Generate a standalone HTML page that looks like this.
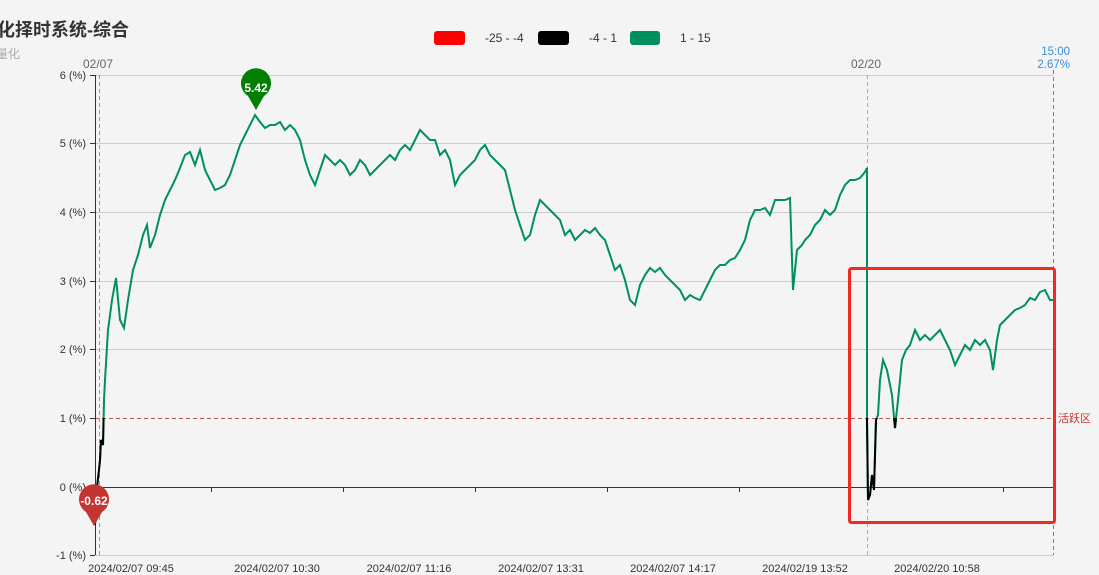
<!DOCTYPE html>
<html><head><meta charset="utf-8"><style>
body{margin:0;background:#f4f4f4;width:1099px;height:575px;overflow:hidden;font-family:"Liberation Sans","Noto Sans CJK SC",sans-serif}
</style></head><body>
<svg width="1099" height="575" style="position:absolute;left:0;top:0" font-family="Liberation Sans, Noto Sans CJK SC, sans-serif">
<defs>
<clipPath id="below"><rect x="0" y="418" width="1099" height="200"/></clipPath>
</defs>
<text x="-3" y="36" font-size="18" font-weight="bold" fill="#333">化择时系统-综合</text>
<text x="-4" y="58" font-size="12" fill="#aaa">量化</text>
<rect x="434" y="31" width="31" height="14" rx="3" fill="#f00"/>
<text x="485" y="42" font-size="12" fill="#333">-25 - -4</text>
<rect x="538" y="31" width="31" height="14" rx="3" fill="#000"/>
<text x="589" y="42" font-size="12" fill="#333">-4 - 1</text>
<rect x="630" y="31" width="30" height="14" rx="3" fill="#009060"/>
<text x="680" y="42" font-size="12" fill="#333">1 - 15</text>
<g stroke="#ccc" stroke-width="1">
<line x1="95" y1="75.5" x2="1053" y2="75.5"/>
<line x1="95" y1="143.5" x2="1053" y2="143.5"/>
<line x1="95" y1="212.5" x2="1053" y2="212.5"/>
<line x1="95" y1="281.5" x2="1053" y2="281.5"/>
<line x1="95" y1="349.5" x2="1053" y2="349.5"/>
<line x1="95" y1="555.5" x2="1053" y2="555.5"/>
</g>
<line x1="95" y1="418.5" x2="1053" y2="418.5" stroke="#b55" stroke-dasharray="4,3"/>
<text x="1058" y="422" font-size="11" fill="#c33">活跃区</text>
<line x1="95" y1="487.5" x2="1053" y2="487.5" stroke="#333"/>
<line x1="95.5" y1="75" x2="95.5" y2="555" stroke="#333"/>
<g stroke="#333"><line x1="90" y1="75.5" x2="95" y2="75.5"/><line x1="90" y1="143.5" x2="95" y2="143.5"/><line x1="90" y1="212.5" x2="95" y2="212.5"/><line x1="90" y1="281.5" x2="95" y2="281.5"/><line x1="90" y1="349.5" x2="95" y2="349.5"/><line x1="90" y1="418.5" x2="95" y2="418.5"/><line x1="90" y1="487.5" x2="95" y2="487.5"/><line x1="90" y1="555.5" x2="95" y2="555.5"/>
<line x1="211.5" y1="487" x2="211.5" y2="492"/><line x1="343.5" y1="487" x2="343.5" y2="492"/><line x1="475.5" y1="487" x2="475.5" y2="492"/><line x1="607.5" y1="487" x2="607.5" y2="492"/><line x1="739.5" y1="487" x2="739.5" y2="492"/><line x1="1003.5" y1="487" x2="1003.5" y2="492"/></g>
<g font-size="11" fill="#333" text-anchor="end">
<text x="86" y="79">6 (%)</text><text x="86" y="147">5 (%)</text><text x="86" y="216">4 (%)</text><text x="86" y="285">3 (%)</text><text x="86" y="353">2 (%)</text><text x="86" y="422">1 (%)</text><text x="86" y="491">0 (%)</text><text x="86" y="559">-1 (%)</text>
</g>
<g font-size="11" fill="#333" text-anchor="middle">
<text x="131" y="572">2024/02/07 09:45</text><text x="277" y="572">2024/02/07 10:30</text><text x="409" y="572">2024/02/07 11:16</text><text x="541" y="572">2024/02/07 13:31</text><text x="673" y="572">2024/02/07 14:17</text><text x="805" y="572">2024/02/19 13:52</text><text x="937" y="572">2024/02/20 10:58</text>
</g>
<line x1="99.5" y1="75" x2="99.5" y2="555" stroke="#999" stroke-dasharray="4,3"/>
<line x1="867.5" y1="75" x2="867.5" y2="555" stroke="#aaa" stroke-dasharray="4,3"/>
<line x1="1053.5" y1="70" x2="1053.5" y2="555" stroke="#3b8fd8" stroke-dasharray="4,3"/>
<text x="83" y="68" font-size="12" fill="#666">02/07</text>
<text x="851" y="68" font-size="12" fill="#666">02/20</text>
<text x="1070" y="55" font-size="11.5" fill="#3b8fd8" text-anchor="end">15:00</text>
<text x="1070" y="68" font-size="11.5" fill="#3b8fd8" text-anchor="end">2.67%</text>
<g id="ln">
<polyline fill="none" stroke="#009060" stroke-width="2" points="95,525 97,487 99,470 100,460 101,440 103,445 104,400 105,380 108,330 112,300 116,278 120,320 124,328 128,300 133,270 138,255 143,235 147,225 150,248 155,235 160,215 165,200 170,190 175,180 180,168 185,155 190,152 195,165 200,150 205,170 210,180 215,190 220,188 225,185 230,175 235,160 240,145 245,135 250,125 255,115 260,122 265,128 270,125 275,125 280,122 285,130 290,125 295,130 300,140 305,160 310,175 315,185 320,170 325,155 330,160 335,165 340,160 345,165 350,175 355,170 360,160 365,165 370,175 375,170 380,165 385,160 390,155 395,160 400,150 405,145 410,150 415,140 420,130 425,135 430,140 435,140 440,155 445,150 450,160 455,185 460,175 465,170 470,165 475,160 480,150 485,145 490,155 495,160 500,165 505,170 510,190 515,210 520,225 525,240 530,235 535,215 540,200 545,205 550,210 555,215 560,220 565,235 570,230 575,240 580,235 585,230 590,233 595,228 600,235 605,240 610,255 615,270 620,265 625,280 630,300 635,305 640,285 645,275 650,268 655,272 660,268 665,275 670,280 675,285 680,290 685,300 690,295 695,298 700,300 705,290 710,280 715,270 720,265 725,265 730,260 735,258 740,250 745,240 750,220 755,210 760,210 765,208 770,215 775,200 780,200 785,200 790,198 793,290 797,250 802,245 805,240 810,235 815,225 820,220 825,210 830,215 835,210 840,195 845,185 850,180 855,180 860,178 865,172 867,168 867,420 868,500 870,495 872,475 874,490 876,420 878,415 880,380 883,360 887,370 892,395 895,428 898,400 902,360 906,350 910,345 915,330 920,340 925,335 930,340 935,335 940,330 945,340 950,350 955,365 960,355 965,345 970,350 975,340 980,345 985,340 990,350 993,370 997,340 1000,325 1005,320 1010,315 1015,310 1020,308 1025,305 1030,298 1035,300 1040,292 1045,290 1050,300 1053,300"/>
</g>
<use href="#ln" clip-path="url(#below)" style="filter:brightness(0)"/>
<rect x="849.5" y="268.5" width="205" height="254" rx="2" fill="none" stroke="#f02a22" stroke-width="3"/>
<path d="M256,110 L248,96 A15,15 0 1 1 264,96 Z" fill="#007f00"/>
<text x="256" y="92" font-size="12" font-weight="bold" fill="#fff" text-anchor="middle">5.42</text>
<path d="M94,526 L86,512 A15,15 0 1 1 102,512 Z" fill="#c23531"/>
<text x="94" y="505" font-size="12" font-weight="bold" fill="#fff" text-anchor="middle">-0.62</text>
</svg>
</body></html>
